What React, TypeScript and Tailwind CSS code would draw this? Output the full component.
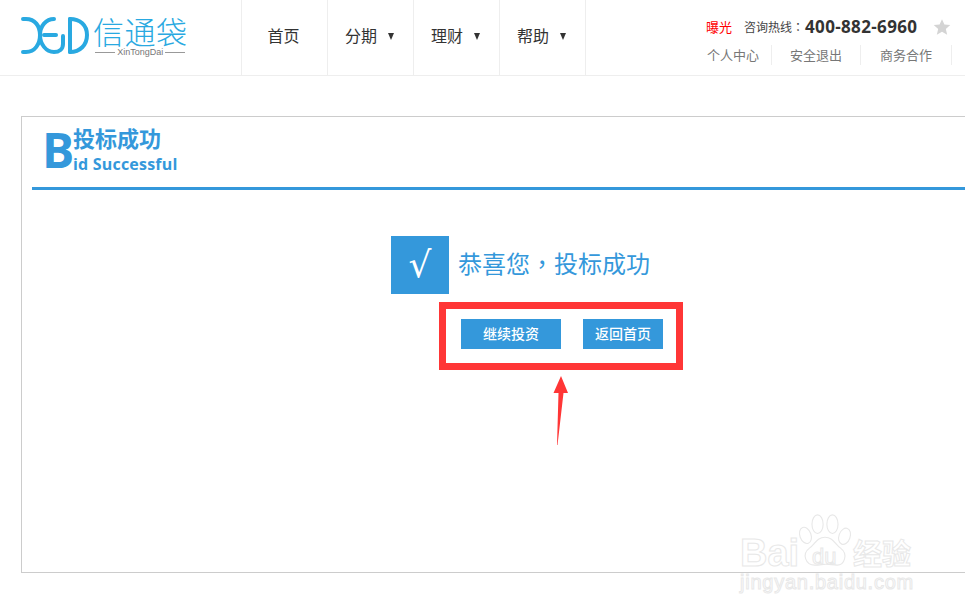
import React from 'react';

const CJK = "font-['Noto_Sans_CJK_SC','Liberation_Sans',sans-serif]";

const NavItem: React.FC<{ label: string; caret?: boolean }> = ({ label, caret }) => (
  <div className="w-[86px] h-full border-l border-[#eeeeee] flex items-center justify-center gap-[11px] pb-[6px] pr-[2px] text-[16px] text-[#333333]">
    <span>{label}</span>
    {caret && <span className="w-0 h-0 border-l-[3.5px] border-r-[3.5px] border-t-[7px] border-l-transparent border-r-transparent border-t-[#333333] mt-[4px]" />}
  </div>
);

const Logo: React.FC = () => (
  <div className="w-[241px] h-full flex items-center pl-[20px] pb-[3px] gap-[3px]">
    <svg width="70" height="40" viewBox="0 0 70 40" fill="none" stroke="#29a9e1" strokeWidth="4" strokeLinecap="round">
      <path d="M3 3 H6 C15 3 20 10 20 19 C20 28 15 36 6 36 H3" />
      <path d="M34 3 C26 3 20 10 20 19 C20 28 26 36 34 36 C39 36 43 33 43 28 V20" />
      <path d="M24 19 H36" />
      <path d="M50 3 V36" />
      <path d="M50 3 C60 3 67 9 67 19 C67 29 60 36 50 36" />
    </svg>
    <div className="flex flex-col items-center">
      <div className="text-[31px] leading-[33px] text-[#29a9e1] font-light tracking-[0.5px]">信通袋</div>
      <div className="flex items-center gap-[2px] text-[9px] leading-[11px] text-[#777777] font-['Liberation_Sans',sans-serif]">
        <span className="w-[20px] h-px bg-[#999999]" />
        XinTongDai
        <span className="w-[20px] h-px bg-[#999999]" />
      </div>
    </div>
  </div>
);

const Header: React.FC = () => (
  <header className="h-[76px] border-b border-[#eeeeee] flex">
    <Logo />
    <nav className="flex h-full border-r border-[#eeeeee]">
      <NavItem label="首页" />
      <NavItem label="分期" caret />
      <NavItem label="理财" caret />
      <NavItem label="帮助" caret />
    </nav>
    <div className="ml-[121px] flex flex-col pt-[17px]">
      <div className="flex items-center h-[20px] -ml-[1px]">
        <span className="text-[13px] text-[#ff0000] w-[38px]">曝光</span>
        <span className="text-[12px] leading-[20px] text-[#444444] w-[61px] whitespace-nowrap">咨询热线<span className="font-['Noto_Sans_CJK_TC',sans-serif]">：</span></span>
        <span className="text-[17px] font-bold text-[#333333] tracking-[0.35px] font-['Open_Sans',sans-serif] w-[128px]">400-882-6960</span>
        <svg width="18" height="18" viewBox="0 0 24 24" fill="#d4d4d4">
          <path d="M12 1.5 L15.2 8.6 L23 9.4 L17.1 14.6 L18.9 22.4 L12 18.3 L5.1 22.4 L6.9 14.6 L1 9.4 L8.8 8.6 Z" />
        </svg>
      </div>
      <div className="flex items-center mt-[8px] text-[13px] text-[#777777]">
        <span className="h-[20px] leading-[20px] pr-[12px] border-r border-[#eeeeee]">个人中心</span>
        <span className="h-[20px] leading-[20px] px-[18px] border-r border-[#eeeeee]">安全退出</span>
        <span className="h-[20px] leading-[20px] px-[19px] border-r border-[#eeeeee]">商务合作</span>
      </div>
    </div>
  </header>
);

const Watermark: React.FC = () => (
  <div className="absolute left-[738px] top-[512px] w-[220px] h-[84px] text-white font-bold [-webkit-text-stroke:1px_#e8e8e8]">
    <svg className="absolute left-[60px] top-0" width="54" height="56" viewBox="0 0 58 56" fill="white" stroke="#e8e8e8" strokeWidth="1.2">
      <ellipse cx="8" cy="23" rx="6" ry="9" transform="rotate(-20 8 23)" />
      <ellipse cx="21" cy="11" rx="6" ry="10" />
      <ellipse cx="37" cy="11" rx="6" ry="10" />
      <ellipse cx="50" cy="24" rx="6" ry="9" transform="rotate(20 50 24)" />
      <path d="M29 25 C20 25 18 33 12 37 C4 43 8 55 18 55 C24 55 26 54 30 54 C34 54 38 55 42 55 C50 55 54 43 46 37 C40 33 38 25 29 25 Z" />
    </svg>
    <span className="absolute left-[2px] top-[18px] text-[38px] leading-[46px] font-['Liberation_Sans',sans-serif]">Bai</span>
    <span className="absolute left-[74px] top-[33px] text-[22px] leading-[24px] font-['Liberation_Sans',sans-serif] font-normal">du</span>
    <span className="absolute left-[115px] top-[22px] text-[29px] leading-[36px]">经验</span>
    <span className="absolute left-[2px] top-[59px] text-[20px] leading-[22px] tracking-[0.75px] font-normal font-['Liberation_Sans',sans-serif] whitespace-nowrap">jingyan.baidu.com</span>
  </div>
);

const Arrow: React.FC = () => (
  <svg className="absolute left-[550px] top-[376px]" width="20" height="70" viewBox="0 0 20 70" fill="#ff3636">
    <path d="M11 0 L18 17 L13.5 17 L7.5 69 L7 69 L8.5 17 L3.5 17 Z" />
  </svg>
);

const App: React.FC = () => (
  <div className={`relative w-[965px] h-[616px] overflow-hidden bg-white ${CJK}`}>
    <Header />
    <main className="pt-[40px] pl-[21px]">
      <section className="w-[960px] h-[457px] border border-r-0 border-[#cccccc] pl-[10px]">
        <div className="h-[73px] border-b-[3px] border-[#3498db] flex pl-[10px] text-[#3498db] font-bold">
          <span className="w-[31px] text-[48px] leading-[50px] mt-[8px] font-['Open_Sans',sans-serif]">B</span>
          <div className="flex flex-col">
            <span className="text-[22px] leading-[28px] mt-[6px]">投标成功</span>
            <span className="text-[16px] leading-[20px] mt-[3px] tracking-[0.2px] font-['Open_Sans',sans-serif]">id Successful</span>
          </div>
        </div>
        <div className="flex flex-col items-start pl-[359px] pt-[46px]">
          <div className="flex items-center gap-[10px]">
            <div className="w-[58px] h-[58px] bg-[#3498db] flex items-center justify-center text-white text-[36px] font-['DejaVu_Sans',sans-serif]">√</div>
            <span className="text-[24px] leading-[30px] mb-[4px] -ml-[1px] text-[#3498db] whitespace-nowrap">恭喜您<span className="font-['Noto_Sans_CJK_TC',sans-serif]">，</span>投标成功</span>
          </div>
          <div className="ml-[48px] mt-[8px] w-[244px] h-[68px] border-[7px] border-[#ff3636] flex items-center pl-[15px] pb-[4px] gap-[22px] text-white text-[14px] font-medium">
            <div className="w-[100px] h-[30px] pb-[2px] bg-[#3498db] flex items-center justify-center">继续投资</div>
            <div className="w-[80px] h-[30px] pb-[2px] bg-[#3498db] flex items-center justify-center">返回首页</div>
          </div>
        </div>
      </section>
    </main>
    <Arrow />
    <Watermark />
  </div>
);

export default App;
